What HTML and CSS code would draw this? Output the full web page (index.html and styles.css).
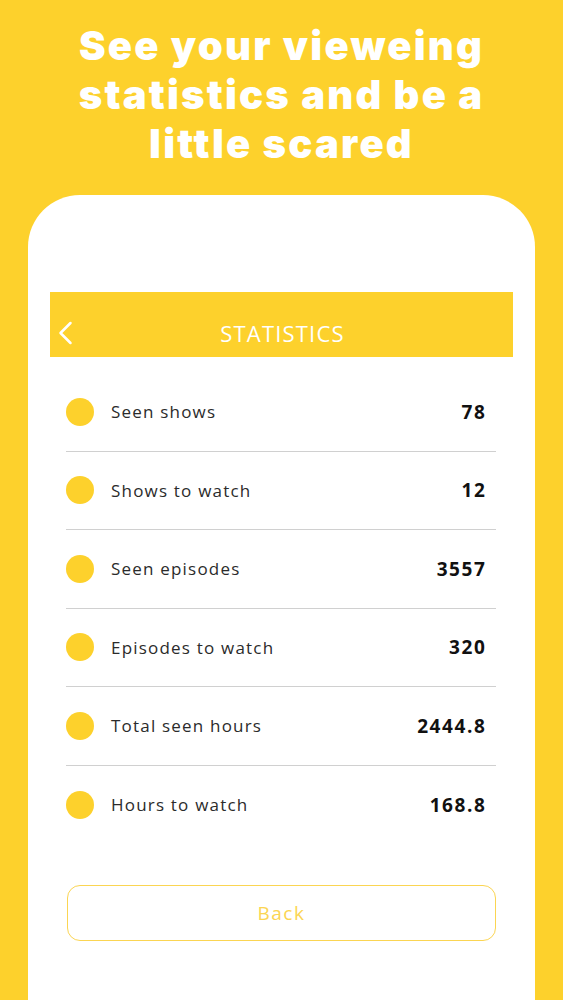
FILE: index.html
```html
<!DOCTYPE html>
<html>
<head>
<meta charset="utf-8">
<link rel="stylesheet" href="styles.css">
</head>
<body>
<h1 class="headline">See your vieweing<br>statistics and be a<br>little scared</h1>
<div class="card">
  <div class="appbar">
    <svg class="back-icon" width="16" height="24" viewBox="0 0 16 24"><path d="M13.5 2 L3.5 12 L13.5 22" fill="none" stroke="#fff" stroke-width="2.5" stroke-linecap="round" stroke-linejoin="round"/></svg>
    <span class="appbar-title">STATISTICS</span>
  </div>
  <ul class="stats">
    <li class="row"><span class="dot"></span><span class="label">Seen shows</span><span class="value">78</span></li>
    <li class="row"><span class="dot"></span><span class="label">Shows to watch</span><span class="value">12</span></li>
    <li class="row"><span class="dot"></span><span class="label">Seen episodes</span><span class="value">3557</span></li>
    <li class="row"><span class="dot"></span><span class="label">Episodes to watch</span><span class="value">320</span></li>
    <li class="row"><span class="dot"></span><span class="label">Total seen hours</span><span class="value">2444.8</span></li>
    <li class="row"><span class="dot"></span><span class="label">Hours to watch</span><span class="value">168.8</span></li>
  </ul>
  <div class="actions">
    <button class="back-btn">Back</button>
  </div>
</div>
</body>
</html>
```
FILE: styles.css
```css
* { box-sizing: border-box; }
html, body { margin: 0; padding: 0; }
body {
  width: 563px;
  height: 1000px;
  overflow: hidden;
  background: #fdd12c;
  font-family: "Open Sans", "Liberation Sans", sans-serif;
}
.headline {
  margin: 0;
  padding: 21px 0 0;
  text-align: center;
  color: #fff;
  font-family: Inter, "Open Sans", sans-serif;
  font-weight: 900;
  font-size: 40px;
  line-height: 49px;
  letter-spacing: 2.2px;
  height: 195px;
}
.card {
  margin: 0 28px;
  background: #fff;
  border-radius: 52px 52px 0 0;
  padding: 97px 22px 0;
  height: 805px;
}
.appbar {
  height: 65px;
  padding-top: 16px;
  background: #fdd12c;
  display: flex;
  align-items: center;
  justify-content: center;
  position: relative;
}
.back-icon {
  position: absolute;
  left: 7px;
  top: 29px;
}
.appbar-title {
  color: #fff;
  font-size: 22px;
  letter-spacing: 1.2px;
  font-weight: 500;
  margin-left: 2px;
}
.stats {
  list-style: none;
  margin: 16px 17px 0 16px;
  padding: 0;
}
.row {
  height: 78.5px;
  display: flex;
  align-items: center;
  border-bottom: 1px solid #d0d0d0;
}
.row:last-child { border-bottom: none; }
.dot {
  width: 28px;
  height: 28px;
  border-radius: 50%;
  background: #fdd12c;
  flex: none;
}
.label {
  margin-left: 17px;
  font-size: 17px;
  color: #2b2b2b;
  letter-spacing: 1.2px;
  flex: 1;
}
.value {
  margin-right: 9.5px;
  font-size: 19px;
  font-weight: 700;
  color: #111;
  letter-spacing: 1.6px;
}
.actions {
  padding: 41px 17px 0 17px;
}
.back-btn {
  display: block;
  width: 100%;
  height: 56px;
  background: #fff;
  border: 1.5px solid #fbd552;
  border-radius: 13px;
  color: #fbd552;
  font-family: "Open Sans", "Liberation Sans", sans-serif;
  font-size: 19px;
  letter-spacing: 1.5px;
}
```
